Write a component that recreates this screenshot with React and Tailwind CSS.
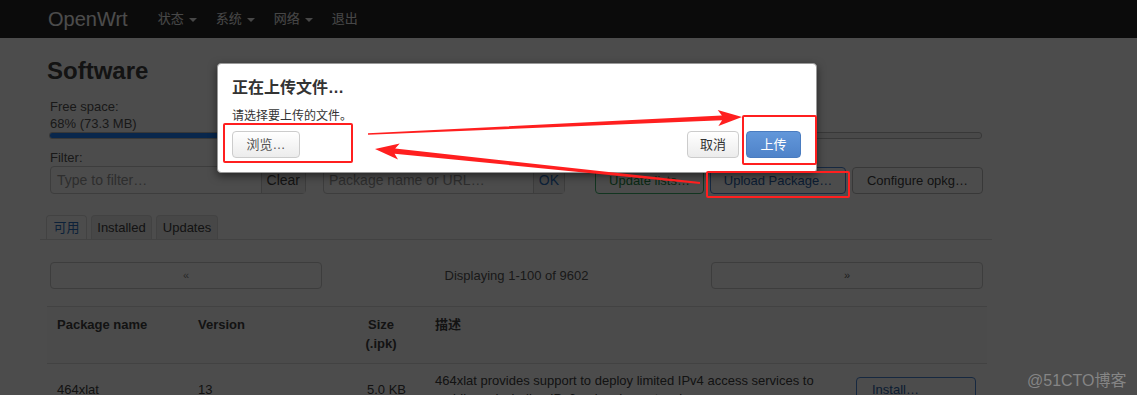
import React from "react";

const NAV = ["状态", "系统", "网络"];

// tapered annotation arrow, tail -> tip
function arrowPoints(tail, tip, headLen, headW, w0, w1) {
  const dx = tip[0] - tail[0];
  const dy = tip[1] - tail[1];
  const len = Math.hypot(dx, dy);
  const u = [dx / len, dy / len];
  const n = [-u[1], u[0]];
  const base = [tip[0] - u[0] * headLen, tip[1] - u[1] * headLen];
  const barb = [base[0] - u[0] * 4, base[1] - u[1] * 4];
  const p = (o, k, v = n) => [o[0] + v[0] * k, o[1] + v[1] * k];
  return [
    p(tail, w0),
    p(base, w1),
    p(barb, headW),
    tip,
    p(barb, -headW),
    p(base, -w1),
    p(tail, -w0),
  ]
    .map((q) => q.map((v) => v.toFixed(1)).join(","))
    .join(" ");
}

const Caret = () => (
  <span className="ml-[5px] inline-block h-0 w-0 border-x-[4px] border-t-[4px] border-x-transparent border-t-current align-middle" />
);

const Btn = ({ children, className = "" }) => (
  <button className={`h-[27px] rounded-[4px] border bg-white px-[12px] text-[13px] leading-none ${className}`}>
    {children}
  </button>
);

export default function App() {
  return (
    <div className="relative h-[395px] w-[1137px] overflow-hidden bg-white font-['Liberation_Sans','Noto_Sans_CJK_SC',sans-serif] text-[13px] text-[#555]">
      {/* navbar */}
      <nav className="flex h-[38px] items-center bg-[#252525] pl-[48px]">
        <span className="mr-[30px] text-[20px] text-white">OpenWrt</span>
        {NAV.map((n) => (
          <span key={n} className="mr-[19px] text-[13px] text-[#eee]">
            {n}
            <Caret />
          </span>
        ))}
        <span className="text-[13px] text-[#eee]">退出</span>
      </nav>

      <main className="ml-[40px] w-[952px]">
        <h2 className="mt-[18px] pl-[7px] text-[24px] font-bold leading-[30px] text-[#404040]">Software</h2>

        <div className="mt-[12px] px-[10px] leading-[17px]">
          <div>Free space:</div>
          <div>68% (73.3 MB)</div>
          <div className="-ml-[1px] h-[7px] w-[933px] overflow-hidden rounded-[3px] border border-[#bbb] bg-[#f5f5f5]">
            <div className="h-full w-[68%] bg-[#2184ff]" />
          </div>
        </div>

        {/* filter row */}
        <div className="mt-[10px] flex items-end pl-[10px] pr-[9px]">
          <div className="w-[256px]">
            <div className="leading-[17px]">Filter:</div>
            <div className="flex h-[28px] rounded-[4px] border border-[#ccc]">
              <span className="flex flex-1 items-center pl-[6px] text-[14px] text-[#999]">Type to filter…</span>
              <span className="flex items-center border-l border-[#ccc] bg-[#f2f2f2] px-[5px] text-[14px] text-[#444]">Clear</span>
            </div>
          </div>
          <div className="ml-[17px] w-[242px]">
            <div className="leading-[17px]">Download and install package:</div>
            <div className="flex h-[28px] rounded-[4px] border border-[#ccc]">
              <span className="flex flex-1 items-center pl-[5px] text-[14px] text-[#999]">Package name or URL…</span>
              <span className="flex items-center border-l border-[#ccc] bg-[#f2f2f2] px-[5px] text-[14px] text-[#2a6fc0]">OK</span>
            </div>
          </div>
          <div className="ml-auto flex gap-[6px]">
            <Btn className="w-[109px] border-[#3fb36b] text-[#1c8a45]">Update lists…</Btn>
            <Btn className="w-[136px] border-[#4a86d8] text-[#2a5fa8]">Upload Package…</Btn>
            <Btn className="w-[131px] border-[#bbb] text-[#404040]">Configure opkg…</Btn>
          </div>
        </div>

        {/* tabs */}
        <div className="mt-[22px] flex h-[24px] items-end gap-[4px] border-b border-[#ddd] pl-[6px]">
          <span className="flex h-[24px] w-[41px] items-center justify-center rounded-t-[4px] border border-b-0 border-[#ddd] bg-white text-[#2a6fc0]">可用</span>
          <span className="flex h-[24px] w-[61px] items-center justify-center rounded-t-[4px] border border-b-0 border-[#ddd] bg-[#eee] text-[#404040]">Installed</span>
          <span className="flex h-[24px] w-[62px] items-center justify-center rounded-t-[4px] border border-b-0 border-[#ddd] bg-[#eee] text-[#404040]">Updates</span>
        </div>

        {/* pager */}
        <div className="mt-[22px] grid grid-cols-[272px_1fr_272px] items-center pl-[10px] pr-[9px]">
          <div className="flex h-[27px] items-center justify-center rounded-[4px] border border-[#ccc] text-[11px] text-[#888]">«</div>
          <div className="text-center text-[13px]">
            <span className="text-[#555]">Displaying 1-100 of 9602</span>
          </div>
          <div className="flex h-[27px] items-center justify-center rounded-[4px] border border-[#ccc] text-[11px] text-[#666]">»</div>
        </div>

        {/* table */}
        <div className="ml-[7px] mt-[17px] w-[940px] text-[13px] text-[#404040]">
          <div className="grid grid-cols-[141px_166px_71px_421px_141px] border-y border-[#ddd] bg-[#fbfbfb] pb-[10px] pt-[8px] font-bold leading-[19px]">
            <div className="px-[10px]">Package name</div>
            <div className="px-[10px]">Version</div>
            <div className="pr-[17px] text-center">Size<br />(.ipk)</div>
            <div className="px-[10px]">描述</div>
            <div />
          </div>
          <div className="grid grid-cols-[141px_166px_71px_421px_141px] items-center py-[8px] leading-[18px]">
            <div className="px-[10px]">464xlat</div>
            <div className="px-[10px]">13</div>
            <div className="pr-[19px] text-right">5.0 KB</div>
            <div className="px-[10px]">464xlat provides support to deploy limited IPv4 access services to mobile and wireline IPv6-only edge networks</div>
            <div className="pl-[10px]">
              <button className="h-[27px] w-[120px] rounded-[4px] border border-[#4a86d8] pl-[15px] text-left text-[#2a5fa8]">Install…</button>
            </div>
          </div>
        </div>
      </main>

      {/* dim layer */}
      <div className="absolute inset-0 bg-black/70" />

      {/* upload dialog */}
      <div className="absolute left-[217px] top-[63px] w-[600px] rounded-[4px] border border-[#999] bg-white px-[14px] pb-[14px] pt-[12px] shadow-[0_3px_9px_rgba(0,0,0,0.5)]">
        <h3 className="text-[16px] font-bold leading-[24px] text-[#333]">正在上传文件…</h3>
        <p className="mt-[8px] text-[12px] leading-[17px] text-[#333]">请选择要上传的文件。</p>
        <div className="mt-[6px] flex items-center">
          <button className="h-[27px] w-[68px] rounded-[4px] border border-[#ccc] bg-gradient-to-b from-white to-[#ececec] text-[13px] text-[#555]">浏览…</button>
          <button className="ml-auto h-[27px] w-[52px] rounded-[4px] border border-[#ccc] bg-gradient-to-b from-white to-[#ececec] text-[13px] text-[#333]">取消</button>
          <button className="ml-[7px] mr-[1px] h-[27px] w-[55px] rounded-[4px] border border-[#4a7cc0] bg-gradient-to-b from-[#6297da] to-[#4f83c9] text-[13px] text-white">上传</button>
        </div>
      </div>

      {/* red annotations */}
      <div className="absolute left-[223px] top-[123px] h-[40px] w-[130px] rounded-[2px] border-2 border-[#ff1f1f]" />
      <div className="absolute left-[742px] top-[115px] h-[50px] w-[75px] rounded-[2px] border-2 border-[#ff1f1f]" />
      <div className="absolute left-[706px] top-[171px] h-[27px] w-[144px] rounded-[2px] border-2 border-[#ff1f1f]" />
      <svg className="absolute inset-0" width="1137" height="395" viewBox="0 0 1137 395">
        <polygon points={arrowPoints([368, 134], [742, 117], 20, 8, 0.7, 2.3)} fill="#ff1f1f" />
        <polygon points={arrowPoints([700, 183], [375, 149], 20, 8, 0.9, 2.6)} fill="#ff1f1f" />
      </svg>

      <div className="absolute left-[1027px] top-[369px] text-[16px] text-[#858585]">@51CTO博客</div>
    </div>
  );
}
